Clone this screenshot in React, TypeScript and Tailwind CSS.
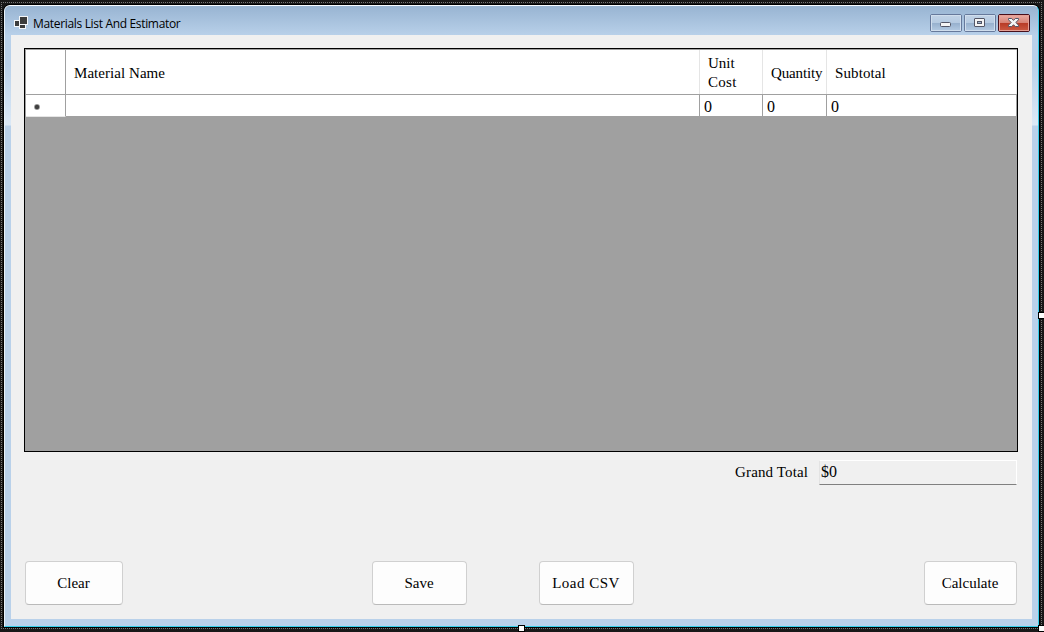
import React from "react";

function AppIcon() {
  return (
    <svg width="15" height="14" viewBox="0 0 15 14" shapeRendering="crispEdges" className="shrink-0">
      <path d="M0 4h5V0h9v9h-3v4H5v-2H0z" fill="#f4f6f8" />
      <path d="M1 5h4v5H1z" fill="#3c3c3c" />
      <path d="M6 1h7v7H6z" fill="#3c3c3c" />
      <path d="M5 8h7v5H5z" fill="#f4f6f8" />
      <path d="M6 9h5v3H6z" fill="#3c3c3c" />
    </svg>
  );
}

function CaptionButton({ kind }: { kind: "min" | "max" | "close" }) {
  const close = kind === "close";
  return (
    <div
      className={
        close
          ? "h-[18px] w-8 rounded-[2px] border border-[#48101b] bg-[#d98476]"
          : "h-[18px] w-8 rounded-[2px] border border-[#66799b] bg-[#c5d6e9]"
      }
    >
      <div
        className={
          close
            ? "flex h-4 w-[30px] items-center justify-center border border-[#e6a095] bg-[linear-gradient(#e9a89e_0,#d78072_7px,#b83a25_7px,#c9563f_100%)]"
            : "flex h-4 w-[30px] items-center justify-center border border-[#d0deed] bg-[linear-gradient(#c0d2e6_0,#b5cae1_7px,#96b0cd_7px,#b0c7e0_100%)]"
        }
      >
        {kind === "min" && (
          <svg width="12" height="14" viewBox="0 0 12 14">
            <rect x="0.5" y="6.5" width="10" height="4" rx="1" fill="#f5f5f5" stroke="#535666" />
          </svg>
        )}
        {kind === "max" && (
          <svg width="12" height="14" viewBox="0 0 12 14">
            <rect x="0.5" y="2.5" width="10" height="8" rx="0.5" fill="#f5f5f5" stroke="#535666" />
            <rect x="3.5" y="5.5" width="4" height="2" fill="#9eb5cf" stroke="#535666" />
          </svg>
        )}
        {kind === "close" && (
          <svg width="12" height="14" viewBox="0 0 12 14">
            <path
              d="M.5 2.5h3.2l1.8 1.9 1.8-1.9h3.2v1.3L7.8 6.5l2.7 2.7v1.3H7.3L5.5 8.7l-1.8 1.8H.5V9.2l2.7-2.7L.5 3.8z"
              fill="#f5f5f5"
              stroke="#535666"
            />
          </svg>
        )}
      </div>
    </div>
  );
}

function PushButton({ label, className }: { label: string; className: string }) {
  return (
    <button
      className={
        "h-11 rounded-[4px] border border-[#d0d0d0] border-b-[#bababa] bg-[#fdfdfd] text-center whitespace-nowrap " +
        className
      }
    >
      {label}
    </button>
  );
}

function DataGrid() {
  return (
    <div className="flex h-[404px] w-[994px] flex-col border border-black bg-[#a0a0a0] pt-px pl-px leading-[19px]">
      <div className="flex h-[45px] w-[991px] items-center border-b border-[#a0a0a0] bg-white">
        <div className="h-full w-10 border-r border-[#a0a0a0]" />
        <div className="flex h-full w-[634px] items-center border-r border-[#e5e5e5] pt-[2px] pl-2 tracking-[0.05px]">
          Material Name
        </div>
        <div className="flex h-full w-[63px] items-center border-r border-[#e5e5e5] pt-[2px] pl-2">
          <span>
            Unit
            <br />
            <span className="tracking-[0.3px]">Cost</span>
          </span>
        </div>
        <div className="flex h-full w-16 items-center border-r border-[#e5e5e5] pt-[2px] pl-2 tracking-[-0.15px]">
          Quantity
        </div>
        <div className="flex h-full flex-1 items-center border-r border-[#e5e5e5] pt-[2px] pl-2 tracking-[0.1px]">
          Subtotal
        </div>
      </div>
      <div className="flex h-[22px] w-[991px]">
        <div className="flex h-[22px] w-10 items-center border-r border-b border-r-[#a0a0a0] border-b-[#e5e5e5] bg-white pt-[3px] pl-2">
          <svg width="6" height="6" viewBox="0 0 6 6">
            <circle cx="3" cy="3" r="3" fill="#a0a0a0" />
            <circle cx="3" cy="3" r="2.2" fill="#404040" />
          </svg>
        </div>
        <div className="h-[21px] w-[634px] border-r border-[#a0a0a0] bg-white" />
        <div className="h-[21px] w-[63px] border-r border-[#a0a0a0] bg-white pt-[3px] pl-1 text-[16px] leading-[18px]">0</div>
        <div className="h-[21px] w-16 border-r border-[#a0a0a0] bg-white pt-[3px] pl-1 text-[16px] leading-[18px]">0</div>
        <div className="h-[21px] flex-1 border-r border-[#a0a0a0] bg-white pt-[3px] pl-1 text-[16px] leading-[18px]">0</div>
      </div>
    </div>
  );
}

export default function App() {
  return (
    <div className="relative h-[632px] w-[1044px] overflow-hidden bg-[#181818] pt-[5px] pl-1 font-['Liberation_Serif',serif] text-[15px] text-black">
      <div className="absolute top-[2px] left-px h-[627px] w-[1041px] border border-dotted border-[#777]" />
      <div className="relative flex h-[622px] w-[1035px] flex-col rounded-t-[6px] border border-t-[#f8fcff] border-r-[#35cde9] border-b-[#35cde9] border-l-[#e9f3fb] bg-[#b9d1ea] shadow-[0_0_0_1px_#000]">
        <div className="flex h-[29px] shrink-0 rounded-t-[5px] bg-linear-to-b from-[#98b4d2] to-[#b8d0e9] pr-2 pl-[9px]">
          <div className="flex pt-[10px]">
            <AppIcon />
            <span className="ml-1 h-4 font-['Open_Sans',sans-serif] text-[12px] leading-4 tracking-[-0.33px] whitespace-nowrap">
              Materials List And Estimator
            </span>
          </div>
          <div className="ml-auto flex gap-[2px] pt-2">
            <CaptionButton kind="min" />
            <CaptionButton kind="max" />
            <CaptionButton kind="close" />
          </div>
        </div>
        <div className="flex h-[591px] bg-[linear-gradient(#b9d1ea_0,#b9d1ea_30px,#dce9f6_90px,#b9d1ea_91px)] pb-[7px] pl-[6px]">
          <div className="flex h-[584px] w-[1021px] flex-col bg-[#f0f0f0] pt-[13px] pl-[13px]">
            <DataGrid />
            <div className="mt-2 flex h-[25px] w-[994px] justify-end pr-px leading-[19px]">
              <span className="mr-[11px] pt-[3px] tracking-[0.12px]">Grand Total</span>
              <div className="h-[25px] w-[198px] border border-t-white border-r-white border-b-[#808080] border-l-[#e3e3e3] pt-px pl-px text-[16px]">
                $0
              </div>
            </div>
            <div className="mt-[76px] flex pl-px">
              <PushButton label="Clear" className="w-[98px] pr-px" />
              <PushButton label="Save" className="ml-[249px] w-[95px] pr-px" />
              <PushButton label="Load CSV" className="ml-[72px] w-[95px] pr-px tracking-[0.5px]" />
              <PushButton label="Calculate" className="ml-[290px] w-[93px] pr-px" />
            </div>
          </div>
        </div>
      </div>
      <div className="absolute top-[312px] left-[1038px] h-[7px] w-[7px] border border-black bg-white" />
      <div className="absolute top-[625px] left-[518px] h-[7px] w-[7px] border border-black bg-white" />
      <div className="absolute top-[625px] left-[1038px] h-[7px] w-[7px] border border-black bg-white" />
    </div>
  );
}
